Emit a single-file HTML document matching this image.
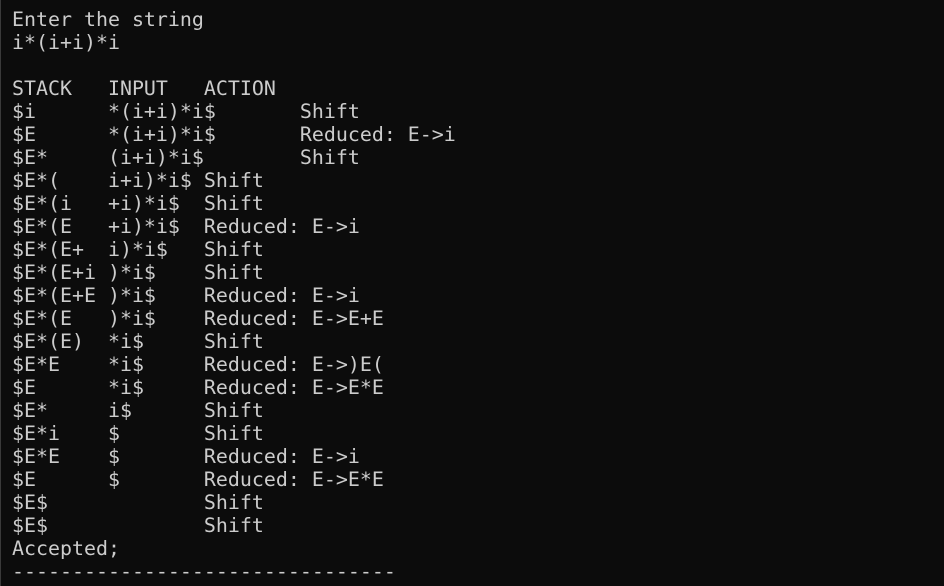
<!DOCTYPE html>
<html><head><style>
html,body{margin:0;padding:0;background:#0c0c0c;width:944px;height:586px;overflow:hidden}
body{border-left:1px solid #3a3a3a;box-sizing:border-box}
pre{margin:0;padding:8px 0 0 11px;font-family:"DejaVu Sans Mono","Liberation Mono",monospace;font-size:19.93px;line-height:23px;color:#cccccc}
</style></head><body><pre>Enter the string
i*(i+i)*i

STACK   INPUT   ACTION
$i      *(i+i)*i$       Shift
$E      *(i+i)*i$       Reduced: E->i
$E*     (i+i)*i$        Shift
$E*(    i+i)*i$ Shift
$E*(i   +i)*i$  Shift
$E*(E   +i)*i$  Reduced: E->i
$E*(E+  i)*i$   Shift
$E*(E+i )*i$    Shift
$E*(E+E )*i$    Reduced: E->i
$E*(E   )*i$    Reduced: E->E+E
$E*(E)  *i$     Shift
$E*E    *i$     Reduced: E->)E(
$E      *i$     Reduced: E->E*E
$E*     i$      Shift
$E*i    $       Shift
$E*E    $       Reduced: E->i
$E      $       Reduced: E->E*E
$E$             Shift
$E$             Shift
Accepted;
--------------------------------</pre></body></html>
